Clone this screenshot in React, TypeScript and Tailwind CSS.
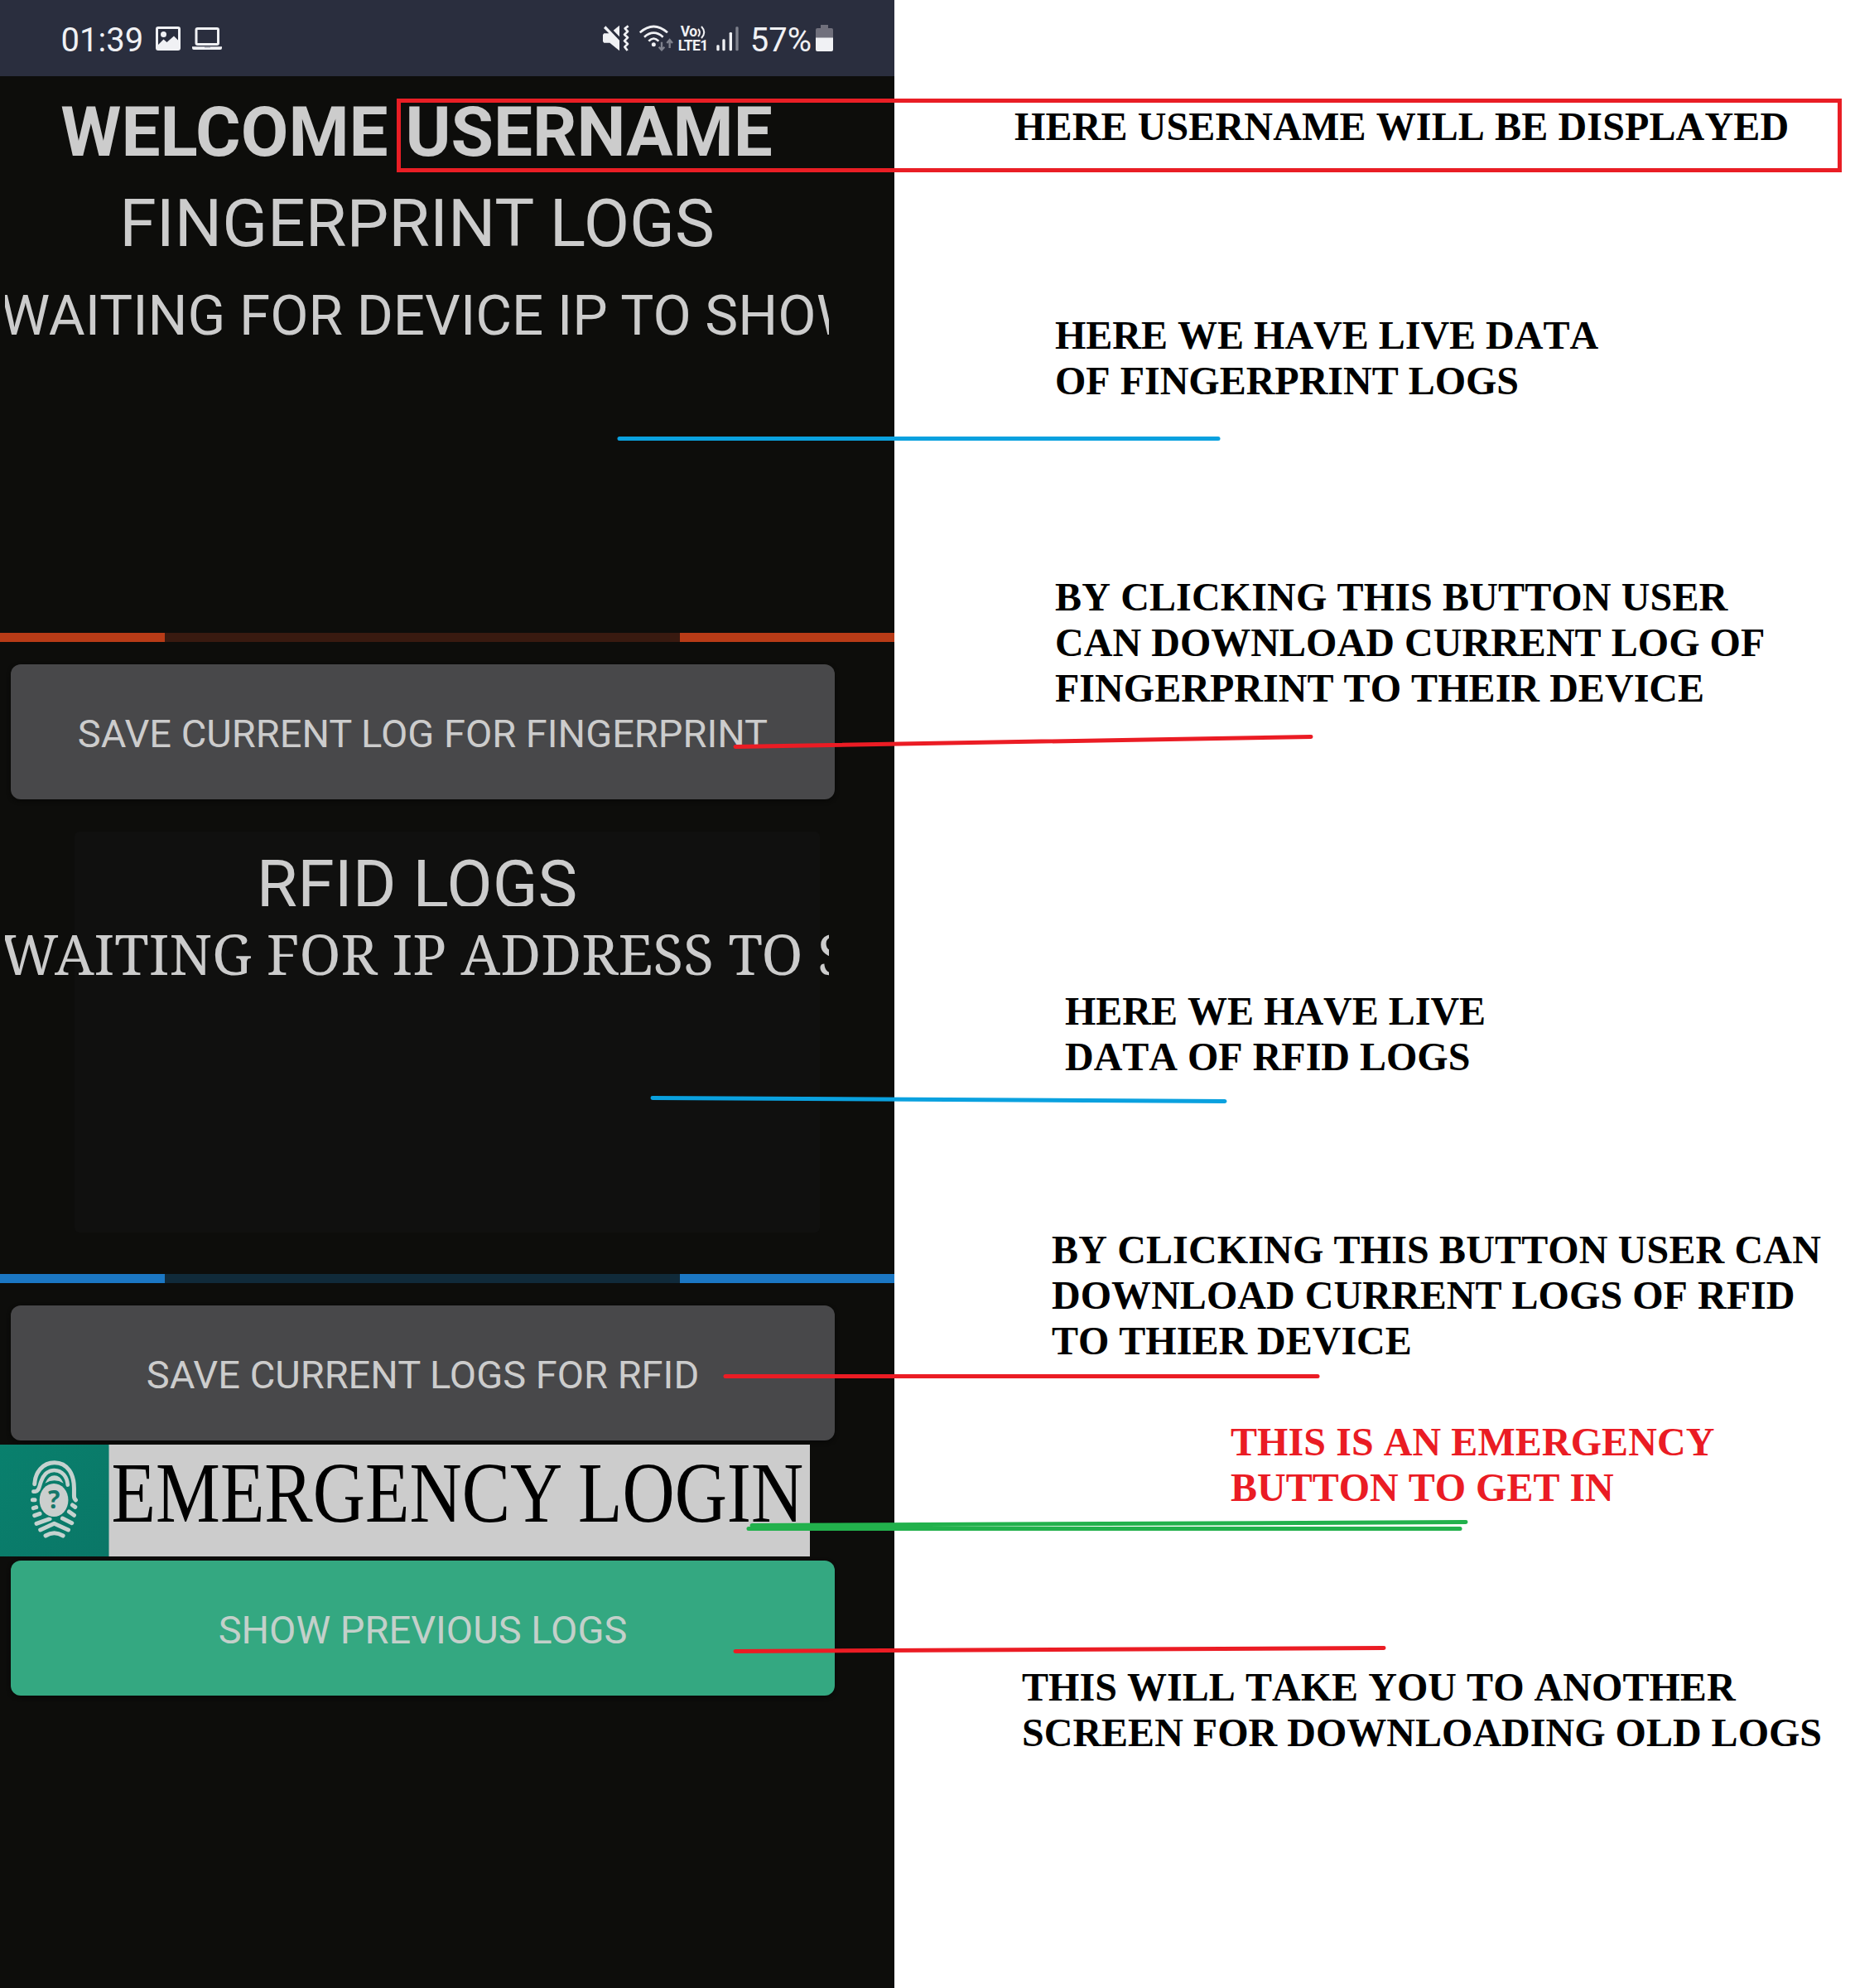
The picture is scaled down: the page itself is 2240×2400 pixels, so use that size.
import type { ReactNode } from 'react';

const connectors = [
  { from: [748, 529.5], to: [1471, 529.5], color: '#0aa1df' },
  { from: [888, 901.5], to: [1583, 889.5], color: '#eb1c24' },
  { from: [788, 1325.5], to: [1479, 1329.5], color: '#0aa1df' },
  { from: [876, 1661.5], to: [1591, 1661.5], color: '#eb1c24' },
  { from: [908, 1841.5], to: [1770, 1837.5], color: '#22b14c' },
  { from: [904, 1845.5], to: [1763, 1845.5], color: '#22b14c' },
  { from: [888, 1993.5], to: [1671, 1989.5], color: '#eb1c24' },
];

function StatusBar() {
  return (
    <div className="flex h-[92px] items-center justify-between bg-[#2a2e3e] pr-[74px] pl-[73.5px] text-[#f0f1f4]">
      <div className="flex items-center">
        <span className="pt-[5px] text-[40px] leading-[47px]">01:39</span>
        <svg className="ml-[15px]" width="30" height="29" viewBox="0 0 30 29">
          <rect x="1.5" y="1.5" width="27" height="26" rx="1.5" fill="none" stroke="#f0f1f4" strokeWidth="3" />
          <circle cx="9.5" cy="9.5" r="3.5" fill="#f0f1f4" />
          <path d="M2 23 L9.5 15.5 L13.5 19 L22 11.5 L28 17.5 V27 H2 Z" fill="#f0f1f4" />
        </svg>
        <svg className="ml-[14px]" width="36" height="27" viewBox="0 0 36 27">
          <rect x="5" y="1.5" width="26.5" height="19" rx="1.5" fill="none" stroke="#f0f1f4" strokeWidth="3" />
          <path d="M0 23.3 H36 V25 Q36 27 34 27 H2 Q0 27 0 25 Z" fill="#f0f1f4" />
          <path d="M15 23.3 H22 V24.6 H15 Z" fill="#9a9ca6" />
        </svg>
      </div>
      <div className="flex items-center">
        <svg width="32" height="32" viewBox="84 60 96 96" fill="#f0f1f4">
          <path d="M84 96 L88 91 H106 L87 72 L94 64 L144 116 V154 L109 125 H88 L84 120 Z" />
          <path d="M122 80 L144 62 V103 Z" />
          <path
            d="M176 64 L164 73 L174 84 L162 95 L174 106 L162 118 L174 129 L163 140 L173 153"
            fill="none"
            stroke="#f0f1f4"
            strokeWidth="8"
            strokeLinejoin="round"
          />
        </svg>
        <svg className="ml-[12px]" width="42" height="32" viewBox="216 60 126 96" fill="none">
          <g stroke="#f0f1f4" strokeWidth="8">
            <path d="M218 88 Q268 44 318 88" />
            <path d="M234 104 Q268 74 302 104" />
            <path d="M250 119 Q268 100 286 119" />
          </g>
          <circle cx="268" cy="131" r="7.5" fill="#f0f1f4" />
          <path d="M297 122 V150 M287 140 L297 151 L307 140" stroke="#7f828d" strokeWidth="7" />
          <path d="M326 144 V116 M316 126 L326 114 L336 126" stroke="#7f828d" strokeWidth="7" />
        </svg>
        <div className="ml-[5px] flex w-[38px] flex-col pt-[2px] text-[17.5px] leading-[17px] font-bold whitespace-nowrap">
          <div className="flex pl-[3px]">
            <span className="tracking-[-0.5px]">Vo</span>
            <svg width="11" height="17" viewBox="0 0 11 17" fill="none" stroke="#f0f1f4" strokeWidth="2">
              <path d="M1 5 Q5 9.5 1 14" />
              <path d="M5 2 Q11.5 9 5 16" />
            </svg>
          </div>
          <span className="tracking-[-0.6px]">LTE1</span>
        </div>
        <svg className="ml-[8px]" width="27" height="32" viewBox="496 60 81 96" fill="#f0f1f4">
          <rect x="497" y="133" width="10" height="21" rx="4" />
          <rect x="518" y="112" width="10" height="42" rx="4" />
          <rect x="543" y="87" width="10" height="67" rx="4" />
          <rect x="566" y="67" width="10" height="87" rx="4" fill="#7f828d" />
        </svg>
        <span className="ml-[14px] pt-[5px] text-[40px] leading-[47px]">57%</span>
        <svg className="ml-[5px]" width="21" height="32" viewBox="0 0 21 32">
          <path d="M6 0 H15 V4 H19 Q21 4 21 6 V16 H0 V6 Q0 4 2 4 H6 Z" fill="#70707c" />
          <path d="M0 15.5 H21 V30 Q21 32 19 32 H2 Q0 32 0 30 Z" fill="#f0f1f4" />
        </svg>
      </div>
    </div>
  );
}

function FingerprintIcon() {
  return (
    <svg className="h-full w-[131.5px]" viewBox="0 42 394 405" preserveAspectRatio="none">
      <defs>
        <linearGradient id="teal" x1="0" y1="0" x2="1" y2="1">
          <stop offset="0" stopColor="#09806d" />
          <stop offset="1" stopColor="#0a7767" />
        </linearGradient>
      </defs>
      <rect x="0" y="42" width="394" height="405" fill="url(#teal)" />
      <g fill="none" stroke="#c5d2cf" strokeWidth="15" strokeLinecap="round" strokeLinejoin="round">
        <path d="M125 185 C127 142 155 107 197 107 C245 107 268 150 268 200 V228 Q268 238 274 243" />
        <path d="M121 212 H128 C144 210 141 190 151 170 C160 147 178 135 196 135 C226 135 243 160 245 188" strokeWidth="14" />
        <path d="M118 242 H126" />
        <path d="M121 272 L131 269" />
        <path d="M125 299 L144 292" />
        <path d="M132 328 L180 311" />
        <path d="M262 261 L272 268" />
        <path d="M250 285 L268 298" />
        <path d="M226 309 L260 326" />
        <path d="M146 351 L196 328 L247 351" />
        <path d="M165 372 Q196 353 228 372" />
      </g>
      <path d="M163 182 Q176 154 197 154 Q218 154 230 182 Q197 162 163 182 Z" fill="#c5d2cf" />
      <ellipse cx="195" cy="243" rx="56" ry="65" fill="#0a7c6a" />
      <ellipse cx="195" cy="243" rx="52" ry="60" fill="#cbcfce" />
      <text x="195" y="273" textAnchor="middle" fontSize="90" fontWeight="700" fontFamily="Noto Sans, sans-serif" fill="#16776a">
        ?
      </text>
    </svg>
  );
}

function Progress({ strong, faint }: { strong: string; faint: string }) {
  return (
    <div className="flex h-[11px] shrink-0">
      <div className={`w-[199px] ${strong}`} />
      <div className={`w-[622px] ${faint}`} />
      <div className={`flex-1 ${strong}`} />
    </div>
  );
}

function ActionButton({ color, children }: { color: string; children: ReactNode }) {
  return (
    <button
      className={`ml-[13px] flex h-[163px] w-[995px] shrink-0 items-center justify-center rounded-[12px] pt-[4px] text-[47px] leading-[55px] whitespace-nowrap shadow-[0_2px_5px_#080807] ${color}`}
    >
      {children}
    </button>
  );
}

function Phone() {
  return (
    <div className="flex h-[2400px] w-[1080px] shrink-0 flex-col bg-[#0d0d0b] font-['Roboto',sans-serif] text-[#cccccc]">
      <StatusBar />
      <h1 className="mt-[18px] w-[1006px] text-center text-[83.6px] leading-[98px] font-bold whitespace-nowrap">
        WELCOME USERNAME
      </h1>
      <h2 className="mt-[14px] w-[1007px] text-center text-[80.6px] leading-[95px] whitespace-nowrap">FINGERPRINT LOGS</h2>
      <div className="mt-[24px] ml-[6px] h-[423px] w-[995px] overflow-hidden pt-px text-[67.3px] leading-[79px] whitespace-nowrap">
        <p className="ml-[-5.5px]">WAITING FOR DEVICE IP TO SHOW</p>
      </div>
      <Progress strong="bg-[#b83b17]" faint="bg-[#391a10]" />
      <div className="h-[27px]" />
      <ActionButton color="bg-[#48484a]">SAVE CURRENT LOG FOR FINGERPRINT</ActionButton>
      <div className="mt-[39px] ml-[90px] h-[484px] w-[900px] shrink-0 rounded-[6px] bg-[#10100f]">
        <div className="ml-[-90px] w-[1007px] pt-[16px]">
          <h2 className="h-[74px] overflow-hidden text-center text-[80.5px] leading-[95px] whitespace-nowrap">RFID LOGS</h2>
          <p className="mt-[11px] ml-[6px] w-[995px] overflow-hidden font-['Noto_Serif',serif] text-[67.5px] leading-[92px] whitespace-nowrap">
            <span className="ml-[-6px]">WAITING FOR IP ADDRESS TO SHOW</span>
          </p>
        </div>
      </div>
      <div className="h-[50px]" />
      <Progress strong="bg-[#1b77c4]" faint="bg-[#102a3a]" />
      <div className="h-[27px]" />
      <ActionButton color="bg-[#48484a]">SAVE CURRENT LOGS FOR RFID</ActionButton>
      <div className="mt-[5px] flex h-[135px] w-[978px] shrink-0 bg-[#cccccc]">
        <FingerprintIcon />
        <span className="mt-px w-[840px] origin-left scale-x-[0.85] pl-[3px] font-['Liberation_Serif',serif] text-[103px] leading-[114px] whitespace-nowrap text-black">
          EMERGENCY LOGIN
        </span>
      </div>
      <div className="h-[5px]" />
      <ActionButton color="bg-[#34a881] text-[#c3d0ca]">SHOW PREVIOUS LOGS</ActionButton>
    </div>
  );
}

function Notes() {
  return (
    <div className="flex h-[2400px] flex-1 flex-col bg-white pt-[125px] font-['Liberation_Serif',serif] text-[48px] leading-[55px] font-bold whitespace-nowrap text-black [font-kerning:none]">
      <p className="ml-[145px] tracking-[0.14px]">HERE USERNAME WILL BE DISPLAYED</p>
      <div className="mt-[197px] ml-[194px]">
        <p>HERE WE HAVE LIVE DATA</p>
        <p>OF FINGERPRINT LOGS</p>
      </div>
      <div className="mt-[206px] ml-[194px]">
        <p className="tracking-[0.15px]">BY CLICKING THIS BUTTON USER</p>
        <p className="tracking-[0.05px]">CAN DOWNLOAD CURRENT LOG OF</p>
        <p className="tracking-[0.05px]">FINGERPRINT TO THEIR DEVICE</p>
      </div>
      <div className="mt-[335px] ml-[206px]">
        <p>HERE WE HAVE LIVE</p>
        <p>DATA OF RFID LOGS</p>
      </div>
      <div className="mt-[178px] ml-[190px]">
        <p className="tracking-[0.15px]">BY CLICKING THIS BUTTON USER CAN</p>
        <p className="tracking-[0.05px]">DOWNLOAD CURRENT LOGS OF RFID</p>
        <p>TO THIER DEVICE</p>
      </div>
      <div className="mt-[67px] ml-[406px] text-[#ea1c24]">
        <p className="tracking-[0.08px]">THIS IS AN EMERGENCY</p>
        <p>BUTTON TO GET IN</p>
      </div>
      <div className="mt-[186px] ml-[154px]">
        <p className="tracking-[0.05px]">THIS WILL TAKE YOU TO ANOTHER</p>
        <p className="tracking-[0.02px]">SCREEN FOR DOWNLOADING OLD LOGS</p>
      </div>
    </div>
  );
}

export default function App() {
  return (
    <div className="relative flex h-[2400px] w-[2240px] overflow-hidden bg-white">
      <Phone />
      <Notes />
      <div className="absolute top-[119px] left-[479px] h-[89px] w-[1745px] border-[5px] border-[#e91e25]" />
      <svg className="pointer-events-none absolute inset-0" width="2240" height="2400">
        {connectors.map(({ from, to, color }, i) => (
          <line
            key={i}
            x1={from[0]}
            y1={from[1]}
            x2={to[0]}
            y2={to[1]}
            stroke={color}
            strokeWidth="5"
            strokeLinecap="round"
          />
        ))}
      </svg>
    </div>
  );
}
